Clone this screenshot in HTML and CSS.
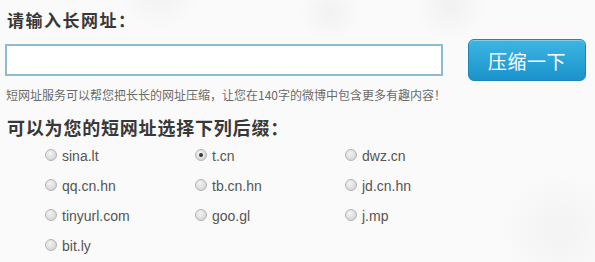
FILE: index.html
```html
<!DOCTYPE html>
<html lang="zh-CN">
<head>
<meta charset="utf-8">
<title>短网址</title>
<link rel="stylesheet" href="styles.css">
</head>
<body>
<div class="page">
  <h1 class="title">请输入长网址：</h1>
  <div class="input-row">
    <input class="url-input" type="text">
    <button class="btn">压缩一下</button>
  </div>
  <p class="help">短网址服务可以帮您把长长的网址压缩，让您在140字的微博中包含更多有趣内容！</p>
  <h2 class="title title-2">可以为您的短网址选择下列后缀：</h2>
  <div class="options">
    <label class="opt"><span class="radio"></span>sina.lt</label>
    <label class="opt"><span class="radio checked"></span>t.cn</label>
    <label class="opt"><span class="radio"></span>dwz.cn</label>
    <label class="opt"><span class="radio"></span>qq.cn.hn</label>
    <label class="opt"><span class="radio"></span>tb.cn.hn</label>
    <label class="opt"><span class="radio"></span>jd.cn.hn</label>
    <label class="opt"><span class="radio"></span>tinyurl.com</label>
    <label class="opt"><span class="radio"></span>goo.gl</label>
    <label class="opt"><span class="radio"></span>j.mp</label>
    <label class="opt"><span class="radio"></span>bit.ly</label>
  </div>
</div>
</body>
</html>
```
FILE: styles.css
```css
html, body {
  margin: 0;
  padding: 0;
}
body {
  width: 595px;
  height: 262px;
  overflow: hidden;
  background-color: #fafafa;
  background-image:
    radial-gradient(circle at 160px -10px, rgba(230,230,230,0.45) 0, rgba(230,230,230,0) 40px),
    radial-gradient(circle at 330px 12px, rgba(230,230,230,0.4) 0, rgba(230,230,230,0) 30px),
    radial-gradient(circle at 450px 5px, rgba(230,230,230,0.45) 0, rgba(230,230,230,0) 35px),
    radial-gradient(circle at 560px 230px, rgba(238,238,238,0.6) 0, rgba(238,238,238,0) 60px);
  font-family: "Liberation Sans", "Noto Sans CJK SC", sans-serif;
  color: #444;
}
.page {
  padding: 8px 0 0 5px;
}
.title {
  margin: 0;
  padding-left: 2px;
  font-family: "Noto Sans CJK SC", sans-serif;
  font-size: 17px;
  line-height: 24px;
  font-weight: 700;
  letter-spacing: 1.5px;
  color: #383838;
}
.title-2 {
  margin-top: 12px;
  font-size: 18px;
  letter-spacing: 0.8px;
}
.input-row {
  display: flex;
  align-items: center;
  margin-top: 7px;
}
.url-input {
  box-sizing: border-box;
  width: 438px;
  height: 32px;
  margin: 0;
  border: 2px solid #8dbccc;
  background: #fff;
  outline: none;
}
.btn {
  box-sizing: border-box;
  width: 118px;
  height: 42px;
  margin-left: 25px;
  border: 1px solid #1c86bb;
  border-radius: 6px;
  background: linear-gradient(#3db5e2, #1a93cc);
  box-shadow: inset 0 1px 0 rgba(255,255,255,0.35);
  color: #fff;
  font-family: "Noto Sans CJK SC", sans-serif;
  font-size: 19px;
  letter-spacing: 0.5px;
  padding: 0;
}
.help {
  margin: 6px 0 0 1px;
  font-family: "Noto Sans CJK SC", sans-serif;
  font-size: 12px;
  line-height: 16px;
  color: #6a6a6a;
}
.options {
  display: grid;
  grid-template-columns: 150px 150px 150px;
  grid-auto-rows: 30px;
  margin-top: 2px;
  padding-left: 40px;
}
.opt {
  display: flex;
  align-items: center;
  font-size: 14px;
  color: #555;
}
.radio {
  box-sizing: border-box;
  width: 12px;
  height: 12px;
  margin-right: 5px;
  margin-top: -2px;
  border: 1px solid #b4b4b4;
  border-radius: 50%;
  background: radial-gradient(circle at 40% 35%, #f4f4f4 0, #dcdcdc 60%, #cfcfcf 100%);
  position: relative;
}
.radio.checked::after {
  content: "";
  position: absolute;
  left: 3px;
  top: 3px;
  width: 4px;
  height: 4px;
  border-radius: 50%;
  background: #3a3a3a;
}
```
